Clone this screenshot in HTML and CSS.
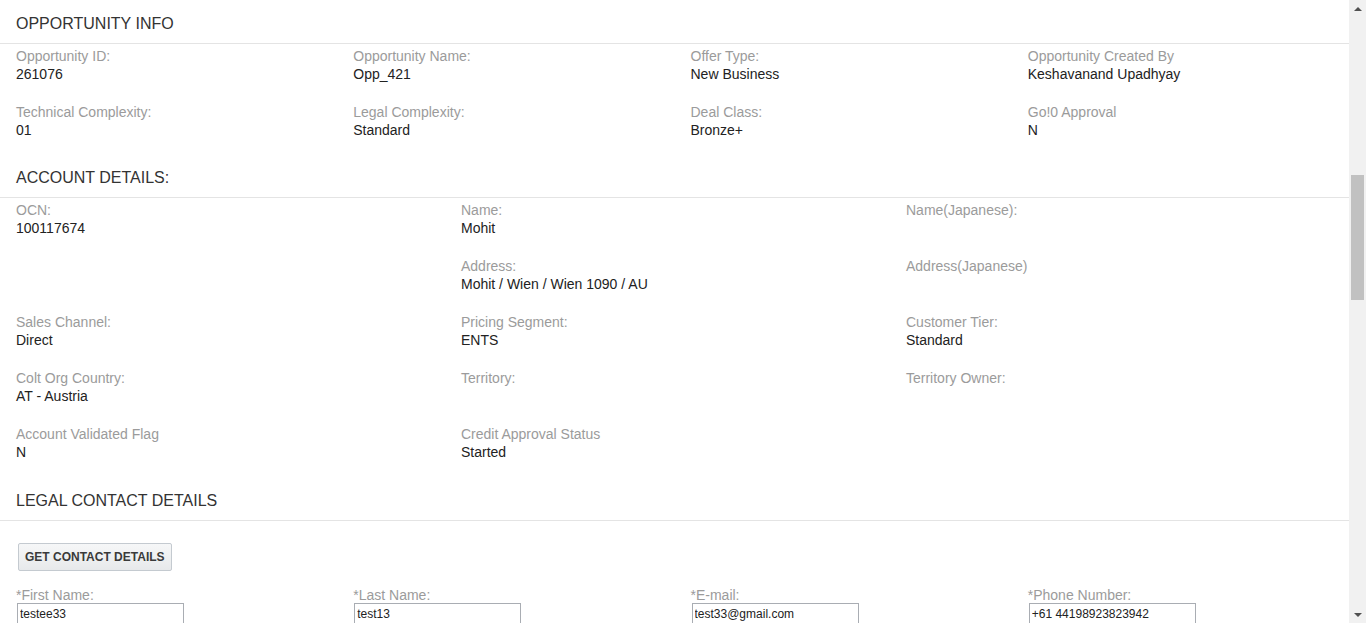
FILE: index.html
```html
<!DOCTYPE html>
<html lang="en">
<head>
<meta charset="utf-8">
<title>Opportunity Info</title>
<link rel="stylesheet" href="styles.css">
</head>
<body>
<div class="page">
  <main class="content">
    <section class="section">
      <h2 class="section-title">OPPORTUNITY INFO</h2>
      <div class="fields cols-4">
        <div class="field"><div class="label">Opportunity ID:</div><div class="value">261076</div></div>
        <div class="field"><div class="label">Opportunity Name:</div><div class="value">Opp_421</div></div>
        <div class="field"><div class="label">Offer Type:</div><div class="value">New Business</div></div>
        <div class="field"><div class="label">Opportunity Created By</div><div class="value">Keshavanand Upadhyay</div></div>
        <div class="field"><div class="label">Technical Complexity:</div><div class="value">01</div></div>
        <div class="field"><div class="label">Legal Complexity:</div><div class="value">Standard</div></div>
        <div class="field"><div class="label">Deal Class:</div><div class="value">Bronze+</div></div>
        <div class="field"><div class="label">Go!0 Approval</div><div class="value">N</div></div>
      </div>
    </section>

    <section class="section">
      <h2 class="section-title">ACCOUNT DETAILS:</h2>
      <div class="fields cols-3">
        <div class="field"><div class="label">OCN:</div><div class="value">100117674</div></div>
        <div class="field"><div class="label">Name:</div><div class="value">Mohit</div></div>
        <div class="field"><div class="label">Name(Japanese):</div><div class="value"></div></div>
        <div class="field empty"></div>
        <div class="field"><div class="label">Address:</div><div class="value">Mohit / Wien / Wien 1090 / AU</div></div>
        <div class="field"><div class="label">Address(Japanese)</div><div class="value"></div></div>
        <div class="field"><div class="label">Sales Channel:</div><div class="value">Direct</div></div>
        <div class="field"><div class="label">Pricing Segment:</div><div class="value">ENTS</div></div>
        <div class="field"><div class="label">Customer Tier:</div><div class="value">Standard</div></div>
        <div class="field"><div class="label">Colt Org Country:</div><div class="value">AT - Austria</div></div>
        <div class="field"><div class="label">Territory:</div><div class="value"></div></div>
        <div class="field"><div class="label">Territory Owner:</div><div class="value"></div></div>
        <div class="field"><div class="label">Account Validated Flag</div><div class="value">N</div></div>
        <div class="field"><div class="label">Credit Approval Status</div><div class="value">Started</div></div>
      </div>
    </section>

    <section class="section">
      <h2 class="section-title">LEGAL CONTACT DETAILS</h2>
      <div class="actions">
        <button class="btn" type="button">GET CONTACT DETAILS</button>
      </div>
      <div class="form cols-4">
        <div class="form-field"><label class="label">*First Name:</label><input class="input" type="text" value="testee33"></div>
        <div class="form-field"><label class="label">*Last Name:</label><input class="input" type="text" value="test13"></div>
        <div class="form-field"><label class="label">*E-mail:</label><input class="input" type="text" value="test33@gmail.com"></div>
        <div class="form-field"><label class="label">*Phone Number:</label><input class="input" type="text" value="+61 44198923823942"></div>
      </div>
    </section>
  </main>

  <div class="scrollbar">
    <div class="sb-btn"><span class="arrow-up"></span></div>
    <div class="sb-track"><div class="sb-thumb"></div></div>
    <div class="sb-btn"><span class="arrow-down"></span></div>
  </div>
</div>
</body>
</html>
```

FILE: styles.css
```css
* { box-sizing: border-box; }

html, body {
  margin: 0;
  padding: 0;
  height: 623px;
  overflow: hidden;
  background: #fff;
  font-family: "Liberation Sans", Arial, sans-serif;
  color: #333;
}

.page {
  display: flex;
  height: 623px;
}

.content {
  flex: 1;
  min-width: 0;
  overflow: hidden;
}

.section-title {
  margin: 0;
  padding: 15px 16px 10px;
  font-size: 16px;
  line-height: 18px;
  font-weight: normal;
  color: #333;
  border-bottom: 1px solid #e4e4e4;
}

.fields {
  display: grid;
  row-gap: 20px;
  padding: 3px 0 15px;
}

.cols-4 { grid-template-columns: repeat(4, 1fr); }
.fields.cols-3 { grid-template-columns: repeat(3, 1fr); padding-right: 14px; padding-bottom: 16px; }

.field {
  padding-left: 16px;
  font-size: 14px;
  line-height: 18px;
}

.label {
  display: block;
  color: #9b9b9b;
  font-size: 14px;
  line-height: 18px;
}

.value {
  color: #222;
  min-height: 18px;
}

.actions {
  padding: 22px 0 0 18px;
}

.btn {
  height: 28px;
  padding: 0 6px;
  font-family: "Liberation Sans", Arial, sans-serif;
  font-size: 12px;
  font-weight: bold;
  color: #3a3a3a;
  background: linear-gradient(#f6f7f8, #e7e9eb);
  border: 1px solid #c4cad0;
  border-radius: 2px;
}

.form {
  display: grid;
  margin-top: 15px;
}

.form-field {
  padding-left: 16px;
}

.input {
  display: block;
  width: 167px;
  height: 22px;
  margin: -1px 0 0 1px;
  padding: 1px 2px;
  font-family: "Liberation Sans", Arial, sans-serif;
  font-size: 12px;
  color: #222;
  border: 1px solid #a9adb3;
  border-radius: 0;
  background: #fff;
}

.scrollbar {
  width: 17px;
  flex: 0 0 17px;
  background: #f1f1f1;
  display: flex;
  flex-direction: column;
}

.sb-btn {
  height: 17px;
  display: flex;
  align-items: center;
  justify-content: center;
}

.arrow-up {
  width: 0;
  height: 0;
  border-left: 4px solid transparent;
  border-right: 4px solid transparent;
  border-bottom: 4px solid #505050;
}

.arrow-down {
  width: 0;
  height: 0;
  border-left: 4px solid transparent;
  border-right: 4px solid transparent;
  border-top: 4px solid #505050;
}

.sb-track {
  flex: 1;
  padding: 158px 2px 0;
}

.sb-thumb {
  height: 125px;
  background: #c1c1c1;
}
```
